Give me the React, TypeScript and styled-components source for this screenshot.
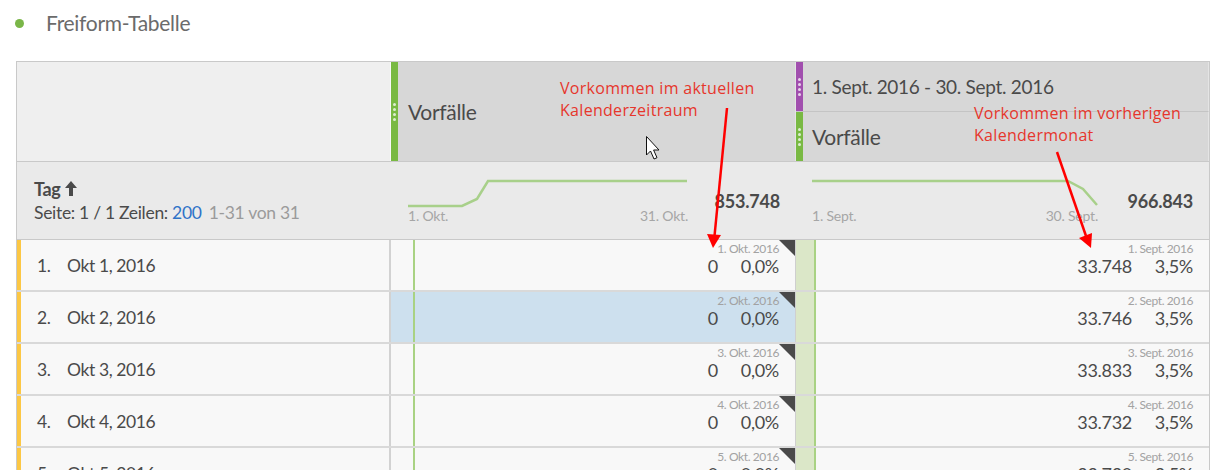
import React from "react";
import styled, { createGlobalStyle } from "styled-components";

const Global = createGlobalStyle`
  html, body { margin: 0; padding: 0; background: #ffffff; }
  body { font-family: Lato, "Open Sans", sans-serif; color: #4b4b4b; }
  * { box-sizing: border-box; }
`;

const Page = styled.div`
  position: relative;
  width: 1224px;
  height: 470px;
  overflow: hidden;
`;

const TitleBar = styled.div`
  height: 61px;
  display: flex;
  align-items: flex-start;
  padding: 11px 0 0 15px;
  gap: 22px;
`;

const Dot = styled.span`
  width: 9px;
  height: 9px;
  border-radius: 50%;
  background: #7ab648;
  margin-top: 8px;
`;

const TitleText = styled.span`
  font-size: 21px;
  line-height: 24px;
  color: #6b6b6b;
  letter-spacing: -0.3px;
`;

const Table = styled.div`
  margin-left: 16px;
  width: 1194px;
  border: 1px solid #c9c9c9;
  border-bottom: none;
`;

const Row = styled.div<{ $h: number; $bg?: string }>`
  display: grid;
  grid-template-columns: 374px 405px 413px;
  height: ${(p) => p.$h}px;
  background: ${(p) => p.$bg ?? "transparent"};
  border-bottom: ${(p) => (p.$h > 60 ? "1px solid #c9c9c9" : "2px solid #d9d9d9")};
`;

const HeadBlank = styled.div`
  background: #efefef;
  border-right: 1px solid #f9f9f9;
`;

const HeadCol = styled.div`
  display: flex;
  flex-direction: column;
`;

const HeadCell = styled.div<{ $split?: boolean }>`
  flex: 1;
  display: flex;
  background: #d7d7d7;
  border-right: 1px solid #e4e4e4;
  border-bottom: ${(p) => (p.$split ? "1px solid #c4c4c4" : "none")};
`;

const Grip = styled.div<{ $color: string }>`
  width: 7px;
  background: ${(p) => p.$color};
  display: flex;
  flex-direction: column;
  align-items: center;
  justify-content: center;
  gap: 2px;
`;

const GripDot = styled.span`
  width: 3px;
  height: 3px;
  border-radius: 50%;
  background: rgba(255, 255, 255, 0.75);
`;

const HeadLabel = styled.div<{ $pad: number; $size: number }>`
  display: flex;
  align-items: center;
  padding-left: ${(p) => p.$pad}px;
  font-size: ${(p) => p.$size}px;
  color: #4a4a4a;
  letter-spacing: -0.3px;
`;

const SummaryLeft = styled.div`
  display: flex;
  flex-direction: column;
  justify-content: center;
  padding-left: 17px;
`;

const DimName = styled.div`
  display: flex;
  align-items: center;
  gap: 5px;
  font-size: 18px;
  font-weight: 700;
  line-height: 24px;
  color: #4a4a4a;
  letter-spacing: -0.4px;
`;

const Paging = styled.div`
  font-size: 17.5px;
  line-height: 24px;
  color: #4b4b4b;
  letter-spacing: -0.3px;
`;

const Blue = styled.span`
  color: #2f73c8;
`;

const Muted = styled.span`
  color: #9b9b9b;
  margin-left: 7px;
`;

const SummaryMetric = styled.div<{ $pl: number }>`
  display: flex;
  align-items: center;
  justify-content: space-between;
  padding: 0 16px 0 ${(p) => p.$pl}px;
`;

const Spark = styled.div<{ $w: number }>`
  width: ${(p) => p.$w}px;
  display: flex;
  flex-direction: column;
`;

const SparkLabels = styled.div`
  display: flex;
  justify-content: space-between;
  font-size: 14px;
  line-height: 16px;
  color: #a6a6a6;
  letter-spacing: -0.2px;
`;

const Total = styled.div`
  font-size: 18px;
  font-weight: 700;
  color: #4a4a4a;
  letter-spacing: -0.2px;
`;

const DimCell = styled.div`
  display: flex;
  align-items: center;
  background: #f8f8f8;
  border-left: 4px solid #fcc744;
  border-right: 2px solid #d2d2d2;
  padding-left: 16px;
  font-size: 17.5px;
  color: #4a4a4a;
  letter-spacing: -0.4px;
`;

const Rank = styled.span`
  width: 30px;
`;

const MetricCell = styled.div<{ $band: string; $bandW: number; $bg: string }>`
  display: flex;
  background: ${(p) => p.$bg};
  & > .band {
    width: ${(p) => p.$bandW}px;
    background: ${(p) => p.$band};
    border-right: 2px solid #a9d283;
  }
`;

const ValueArea = styled.div<{ $border?: boolean }>`
  position: relative;
  flex: 1;
  display: flex;
  flex-direction: column;
  align-items: flex-end;
  padding: 2px 16px 0 0;
  border-right: ${(p) => (p.$border ? "1px solid #cfcfcf" : "none")};
`;

const SmallDate = styled.div`
  font-size: 12px;
  line-height: 13px;
  color: #a2a2a2;
  letter-spacing: -0.4px;
`;

const Values = styled.div`
  display: flex;
  font-size: 18px;
  line-height: 22px;
  color: #4a4a4a;
  letter-spacing: -0.3px;
`;

const Pct = styled.span`
  min-width: 61px;
  text-align: right;
`;

const Corner = styled.span`
  position: absolute;
  top: 0;
  right: 0;
  width: 0;
  height: 0;
  border-top: 16px solid #4a4a4a;
  border-left: 16px solid transparent;
`;

const Note = styled.div<{ $x: number; $y: number }>`
  position: absolute;
  left: ${(p) => p.$x}px;
  top: ${(p) => p.$y}px;
  font-family: "Open Sans", sans-serif;
  font-size: 16px;
  font-weight: 500;
  line-height: 22px;
  color: #e6362c;
  letter-spacing: 0.3px;
  white-space: nowrap;
`;

const Overlay = styled.svg`
  position: absolute;
  left: 0;
  top: 0;
  pointer-events: none;
`;

const Grips = ({ color }: { color: string }) => (
  <Grip $color={color}>
    <GripDot />
    <GripDot />
    <GripDot />
    <GripDot />
  </Grip>
);

const rows = [
  { n: 1, sep: "33.748" },
  { n: 2, sep: "33.746" },
  { n: 3, sep: "33.833" },
  { n: 4, sep: "33.732" },
  { n: 5, sep: "33.730" },
];

export default function App() {
  return (
    <Page>
      <Global />
      <TitleBar>
        <Dot />
        <TitleText>Freiform-Tabelle</TitleText>
      </TitleBar>
      <Table>
        <Row $h={100}>
          <HeadBlank />
          <HeadCell>
            <Grips color="#79b943" />
            <HeadLabel $pad={10} $size={21}>Vorfälle</HeadLabel>
          </HeadCell>
          <HeadCol>
            <HeadCell $split>
              <Grips color="#a14fae" />
              <HeadLabel $pad={9} $size={19}>1. Sept. 2016 - 30. Sept. 2016</HeadLabel>
            </HeadCell>
            <HeadCell>
              <Grips color="#79b943" />
              <HeadLabel $pad={9} $size={21}>Vorfälle</HeadLabel>
            </HeadCell>
          </HeadCol>
        </Row>
        <Row $h={78} $bg="#eaeaea">
          <SummaryLeft>
            <DimName>
              Tag
              <svg width="12" height="15" viewBox="0 0 12 15">
                <path d="M6 0 L12 7 L8 7 L8 15 L4 15 L4 7 L0 7 Z" fill="#4a4a4a" />
              </svg>
            </DimName>
            <Paging>
              Seite: 1 / 1 Zeilen: <Blue>200</Blue>
              <Muted>1-31 von 31</Muted>
            </Paging>
          </SummaryLeft>
          <SummaryMetric $pl={17}>
            <Spark $w={280}>
              <svg width="280" height="30" viewBox="0 0 280 30">
                <polyline
                  points="0,28 54,28 69,21 80,3 279,3"
                  fill="none"
                  stroke="#a8d08a"
                  strokeWidth="2.5"
                />
              </svg>
              <SparkLabels>
                <span>1. Okt.</span>
                <span>31. Okt.</span>
              </SparkLabels>
            </Spark>
            <Total>853.748</Total>
          </SummaryMetric>
          <SummaryMetric $pl={16}>
            <Spark $w={286}>
              <svg width="286" height="30" viewBox="0 0 286 30">
                <polyline
                  points="0,3 256,3 271,11 285,27"
                  fill="none"
                  stroke="#a8d08a"
                  strokeWidth="2.5"
                />
              </svg>
              <SparkLabels>
                <span>1. Sept.</span>
                <span>30. Sept.</span>
              </SparkLabels>
            </Spark>
            <Total>966.843</Total>
          </SummaryMetric>
        </Row>
        {rows.map((r) => (
          <Row $h={52} key={r.n}>
            <DimCell>
              <Rank>{r.n}.</Rank>
              Okt {r.n}, 2016
            </DimCell>
            <MetricCell $band="transparent" $bandW={24} $bg={r.n === 2 ? "#cde0ee" : "#f8f8f8"}>
              <div className="band" />
              <ValueArea $border>
                <SmallDate>{r.n}. Okt. 2016</SmallDate>
                <Values>
                  <span>0</span>
                  <Pct>0,0%</Pct>
                </Values>
                <Corner />
              </ValueArea>
            </MetricCell>
            <MetricCell $band="#dbe7c8" $bandW={20} $bg="#f8f8f8">
              <div className="band" />
              <ValueArea>
                <SmallDate>{r.n}. Sept. 2016</SmallDate>
                <Values>
                  <span>{r.sep}</span>
                  <Pct>3,5%</Pct>
                </Values>
              </ValueArea>
            </MetricCell>
          </Row>
        ))}
      </Table>

      <Note $x={560} $y={77}>
        Vorkommen im aktuellen
        <br />
        Kalenderzeitraum
      </Note>
      <Note $x={974} $y={102}>
        Vorkommen im vorherigen
        <br />
        Kalendermonat
      </Note>

      <Overlay width="1224" height="470" viewBox="0 0 1224 470">
        <line x1="727" y1="108" x2="714.5" y2="236" stroke="#ff0000" strokeWidth="2.5" />
        <polygon points="707,234 721,235 713,248" fill="#ff0000" />
        <line x1="1057" y1="152" x2="1086" y2="236" stroke="#ff0000" strokeWidth="2.5" />
        <polygon points="1079,238 1092,233 1091,248" fill="#ff0000" />
        <path
          d="M646.5 136.5 L646.5 155 L650.5 151 L654 159 L657 157.7 L653.6 150 L659 150 Z"
          fill="#ffffff"
          stroke="#111111"
          strokeWidth="1"
          strokeLinejoin="round"
        />
      </Overlay>
    </Page>
  );
}
